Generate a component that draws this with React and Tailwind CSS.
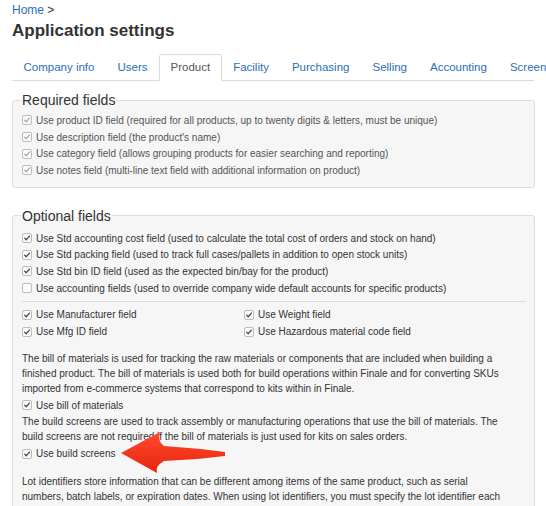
import React from 'react';

const tabs = ['Company info', 'Users', 'Product', 'Facility', 'Purchasing', 'Selling', 'Accounting', 'Screens'];

const required = [
    "Use product ID field (required for all products, up to twenty digits & letters, must be unique)",
    "Use description field (the product's name)",
    "Use category field (allows grouping products for easier searching and reporting)",
    "Use notes field (multi-line text field with additional information on product)",
];

const optional = [
    ["Use Std accounting cost field (used to calculate the total cost of orders and stock on hand)", true],
    ["Use Std packing field (used to track full cases/pallets in addition to open stock units)", true],
    ["Use Std bin ID field (used as the expected bin/bay for the product)", true],
    ["Use accounting fields (used to override company wide default accounts for specific products)", false],
];

const Box = ({ checked, disabled }) => (
    <span className="inline-flex w-[10px] h-[10px] shrink-0 items-center justify-center rounded-[2px] border border-[#bdbdbd] bg-[#fafafa]">
        {checked && (
            <svg viewBox="0 0 10 10" className="w-[8px] h-[8px]">
                <path d="M2 5.2 L4 7.2 L8 2.6" fill="none" stroke={disabled ? '#a8a8a8' : '#4a4a4a'} strokeWidth="1.6" strokeLinecap="round" strokeLinejoin="round" />
            </svg>
        )}
    </span>
);

const Row = ({ label, checked = true, disabled }) => (
    <div className="flex items-center gap-[4px] h-[16.7px] text-[10px] whitespace-nowrap">
        <Box checked={checked} disabled={disabled} />
        <span className={disabled ? 'text-[#555]' : 'text-[#333]'}>{label}</span>
    </div>
);

const App = () => {
    return (
        <div className="relative h-[506px] overflow-hidden bg-white text-[#333] font-['Liberation_Sans',Arial,sans-serif]">
            <div className="px-3">
                <div className="pt-[3px] text-[12px] leading-[14px]">
                    <a className="text-[#2a6fb8]">Home</a> <span className="text-[#333]">&gt;</span>
                </div>
                <h1 className="mt-[3px] text-[17px] leading-[22px] font-bold text-[#333]">Application settings</h1>

                <div className="mt-[12px] flex border-b border-[#dcdcdc] whitespace-nowrap text-[11.5px] leading-[15px]">
                    {tabs.map((t) =>
                        t === 'Product' ? (
                            <div key={t} className="-mb-px px-[10.5px] pt-[5px] pb-[4px] bg-white border border-[#dcdcdc] border-b-white rounded-t-[3px] text-[#555]">
                                {t}
                            </div>
                        ) : (
                            <div key={t} className="px-[10.5px] pt-[5px] pb-[4px] border border-transparent text-[#2a6fb8]">
                                {t}
                            </div>
                        )
                    )}
                </div>

                <fieldset className="mt-[11px] mr-[-1px] rounded-[3px] border border-[#dedede] bg-[#f6f6f6] px-[9px] pb-[8px] pt-[4px]">
                    <legend className="ml-[-1px] px-[1px] text-[14px] leading-[16px] text-[#333]">Required fields</legend>
                    {required.map((r) => (
                        <Row key={r} label={r} disabled />
                    ))}
                </fieldset>

                <fieldset className="mt-[20px] mr-[-1px] rounded-[3px] border border-[#dedede] bg-[#f6f6f6] px-[9px] pb-[8px] pt-[6px] text-[10px]">
                    <legend className="ml-[-1px] px-[1px] text-[14px] leading-[16px] text-[#333]">Optional fields</legend>
                    {optional.map(([l, c]) => (
                        <Row key={l} label={l} checked={c} />
                    ))}
                    <div className="mt-[4px] mb-[5px] border-t border-[#dcdcdc] mr-[-1px]" />
                    <div className="grid grid-cols-[222px_1fr]">
                        <Row label="Use Manufacturer field" />
                        <Row label="Use Weight field" />
                        <Row label="Use Mfg ID field" />
                        <Row label="Use Hazardous material code field" />
                    </div>

                    <p className="mt-[11px] leading-[15px] text-[#333] whitespace-nowrap">
                        The bill of materials is used for tracking the raw materials or components that are included when building a
                        <br />
                        finished product. The bill of materials is used both for build operations within Finale and for converting SKUs
                        <br />
                        imported from e-commerce systems that correspond to kits within in Finale.
                    </p>
                    <div className="mt-[1px]">
                        <Row label="Use bill of materials" />
                    </div>
                    <p className="leading-[15px] text-[#333] whitespace-nowrap">
                        The build screens are used to track assembly or manufacturing operations that use the bill of materials. The
                        <br />
                        build screens are not required if the bill of materials is just used for kits on sales orders.
                    </p>
                    <div className="mt-[2px]">
                        <Row label="Use build screens" />
                    </div>
                    <p className="mt-[12px] leading-[15px] text-[#333] whitespace-nowrap">
                        Lot identifiers store information that can be different among items of the same product, such as serial
                        <br />
                        numbers, batch labels, or expiration dates. When using lot identifiers, you must specify the lot identifier each
                        <br />
                        time you ship, receive, or transfer items (e.g. selecting which serial numbers you are shipping).
                    </p>
                </fieldset>
            </div>

            <svg className="absolute left-[116px] top-[428px] w-[112px] h-[48px]" viewBox="116 428 112 48">
                <defs>
                    <linearGradient id="arrowFill" x1="0" y1="0" x2="0" y2="1">
                        <stop offset="0" stopColor="#ff4a2e" />
                        <stop offset="1" stopColor="#e8240f" />
                    </linearGradient>
                </defs>
                <path
                    d="M121 453 L160 432 Q157 441 164 446 Q195 448 225 452 L225 456 Q195 460 164 461 Q155 466 157 473 Z"
                    fill="url(#arrowFill)"
                />
            </svg>
        </div>
    );
};

export default App;
